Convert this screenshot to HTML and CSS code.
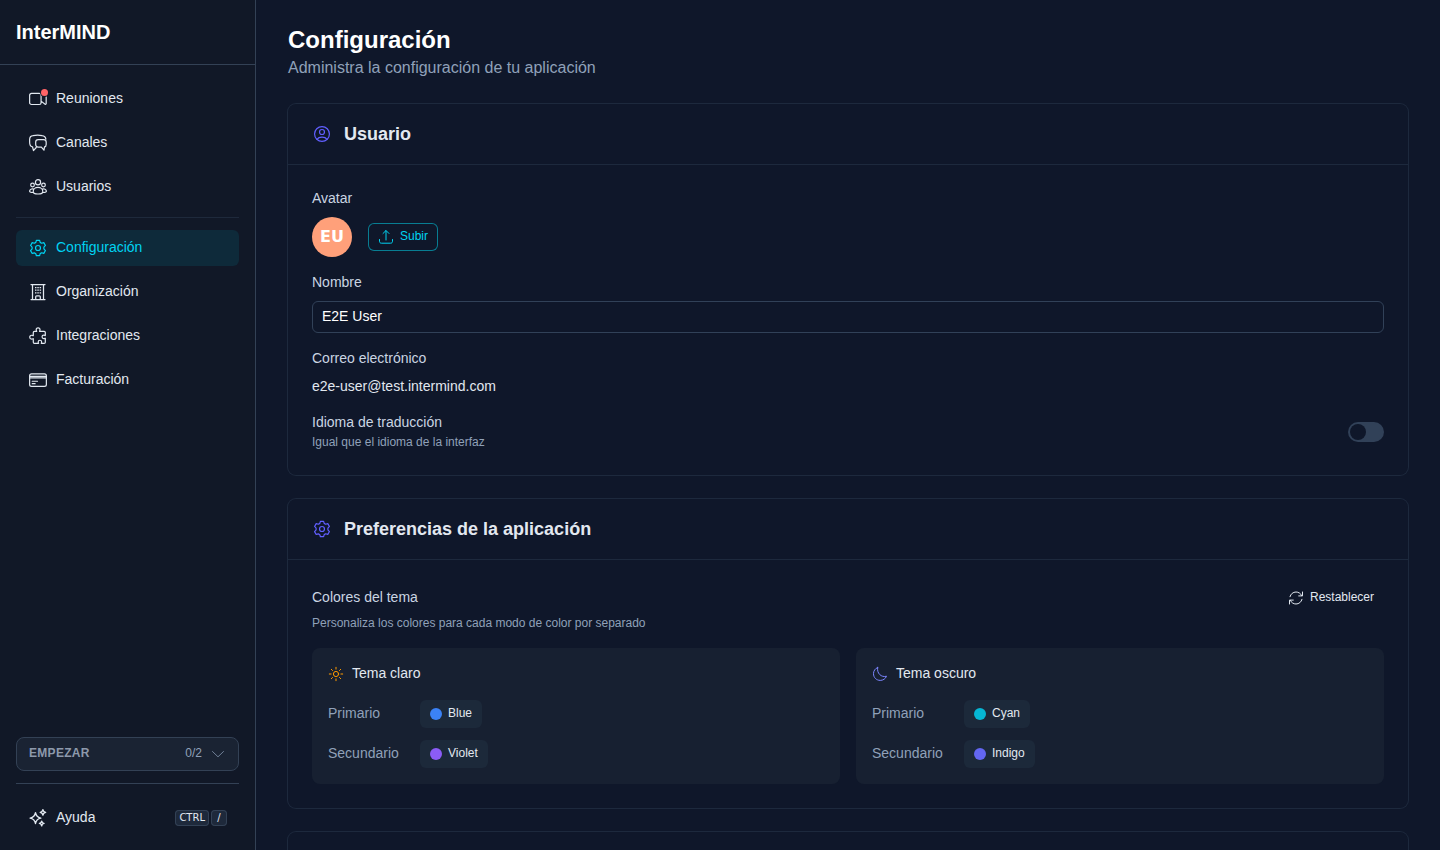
FILE: index.html
```html
<!DOCTYPE html>
<html lang="es">
<head>
    <meta charset="UTF-8">
    <meta name="viewport" content="width=device-width, initial-scale=1.0">
    <title>InterMIND - Configuración</title>
    <link rel="stylesheet" href="styles.css">
</head>
<body>
    <!-- Shared icons -->
    <svg class="sprite" aria-hidden="true">
        <symbol id="icon-gear" viewBox="-0.5 -0.5 21 21">
            <circle cx="10" cy="10" r="2.6"/>
            <path d="M8.3 1.9h3.4l.6 2.2 1.5.9 2.3-.6 1.7 2.9-1.6 1.7v2l1.6 1.7-1.7 2.9-2.3-.6-1.5.9-.6 2.2H8.3L7.7 16l-1.5-.9-2.3.6-1.7-2.9L3.8 11V9L2.2 7.3l1.700-2.900 2.300.6 1.500-.9z"/>
        </symbol>
    </svg>

    <div class="layout">
        <aside class="sidebar">
            <div class="brand">InterMIND</div>

            <nav class="nav">
                <a class="nav-item">
                    <span class="icon-wrap">
                        <svg class="icon" viewBox="-0.4 -0.4 20.8 20.8"><path d="M3.200 4.200h8.100a1.900 1.900 0 0 1 1.900 1.900v7.700a1.900 1.900 0 0 1-1.900 1.900H3.200a1.900 1.900 0 0 1-1.900-1.900V6.100a1.900 1.900 0 0 1 1.900-1.900zM13.200 8v4.200l4.200 3.200a.7.7 0 0 0 1.100-.5V6.600"/></svg>
                        <span class="dot"></span>
                    </span>
                    Reuniones
                </a>
                <a class="nav-item">
                    <svg class="icon" viewBox="-0.4 -0.4 20.8 20.8"><path d="M4.300 13.900h-.5C2.100 13.500 1.300 12 1.300 9V6.300c0-2.500 1.100-3.700 3.500-4 3.200-.6 6.600-.6 9.400 0 2.500.3 3.700 1.200 4 3.700M4.300 13.900l1 4 2.900-3.200"/><path d="M10.200 6.400h5.700c1.800 0 2.600.9 2.600 2.600v2.600c0 1.500-.6 2.300-1.700 2.500l-.6 3.400-2.700-3.300h-3.300c-1.800 0-2.600-.9-2.600-2.600V9c0-1.700.8-2.600 2.600-2.600z"/></svg>
                    Canales
                </a>
                <a class="nav-item">
                    <svg class="icon" viewBox="-0.4 -0.4 20.8 20.8"><circle cx="10" cy="5" r="2.700"/><circle cx="4.300" cy="7.900" r="1.900"/><circle cx="15.700" cy="7.900" r="1.900"/><path d="M10 10.400c3 0 5 2.100 5 4.200 0 2-2.400 2.700-5 2.700s-5-.7-5-2.700c0-2.100 2-4.200 5-4.200zM5 11.900c-2.200-.3-3.700 1-3.700 2.600 0 .8 1 1.200 3.200 1.200M15 11.900c2.200-.3 3.700 1 3.700 2.600 0 .8-1 1.200-3.200 1.200"/></svg>
                    Usuarios
                </a>
                <div class="nav-separator"></div>
                <a class="nav-item active">
                    <svg class="icon"><use href="#icon-gear"/></svg>
                    Configuración
                </a>
                <a class="nav-item">
                    <svg class="icon" viewBox="0 0 20 20"><path d="M3 2.500h14M3 17.500h14M4.500 2.500v15M15.500 2.500v15M7.700 17.500v-2.700c0-.6.4-1 1-1h2.600c.6 0 1 .4 1 1v2.700"/><path class="windows" d="M7 5.500h1.500M9.300 5.500h1.500M11.600 5.500h1.500M7 8.200h1.500M9.300 8.200h1.500M11.600 8.200h1.500M7 10.900h1.500M9.300 10.900h1.500M11.600 10.900h1.500"/></svg>
                    Organización
                </a>
                <a class="nav-item">
                    <svg class="icon" viewBox="-0.4 -0.4 20.8 20.8"><path d="M8.600 5.200c-.3-.6-.5-1-.5-1.600 0-1.200.8-2 2-2s2 .8 2 2c0 .6-.2 1-.5 1.600h4.800c.7 0 1.200.5 1.200 1.200v3.200c-.6-.2-1-.5-1.600-.5-1 0-1.800.8-1.800 1.800s.8 1.900 1.800 1.900c.6 0 1-.3 1.600-.5v4.100c0 .7-.5 1.200-1.200 1.200h-3c.2-.6.4-.9.4-1.400 0-1.100-.8-1.800-1.800-1.800s-1.800.7-1.800 1.800c0 .5.200.8.400 1.400H6.300c-.7 0-1.200-.5-1.200-1.200v-3.600c-.5.2-1 .5-1.700.5-1.100 0-2-.8-2-1.900S2.300 9.200 3.400 9.200c.7 0 1.200.3 1.700.5V6.400c0-.7.5-1.200 1.200-1.200z"/></svg>
                    Integraciones
                </a>
                <a class="nav-item">
                    <svg class="icon" viewBox="-0.4 -0.4 20.8 20.8"><rect x="1.300" y="3.600" width="17.400" height="13" rx="2"/><path d="M1.300 6.300h17.400M1.300 7.700h17.400M4 11.300h5.500M4 13.800h3"/></svg>
                    Facturación
                </a>
            </nav>

            <div class="sidebar-bottom">
                <div class="onboarding">
                    <span class="onboarding-title">EMPEZAR</span>
                    <span class="onboarding-count">0/2</span>
                    <svg class="chevron" viewBox="0 0 16 16"><path d="M2.500 5.500l5.500 5.300 5.500-5.300"/></svg>
                </div>
                <div class="bottom-line"></div>
                <a class="nav-item">
                    <svg class="icon sparkles" viewBox="0 0 20 20"><path d="M7.500 4.700c.6 3.500 1.900 4.800 5.300 5.400-3.400.6-4.700 1.900-5.300 5.400-.6-3.500-1.900-4.800-5.400-5.400 3.500-.6 4.800-1.900 5.400-5.400z"/><path d="M14.900 1.700c.3 1.800.9 2.400 2.700 2.700-1.800.3-2.400.9-2.700 2.700-.3-1.800-.9-2.400-2.700-2.700 1.800-.3 2.400-.9 2.700-2.700zM13.700 13.100c.2 1.400.8 2.100 2.300 2.300-1.500.3-2.100.9-2.300 2.400-.3-1.500-.9-2.100-2.300-2.400 1.400-.2 2-.9 2.300-2.300z"/></svg>
                    Ayuda
                    <span class="keys"><kbd>CTRL</kbd><kbd>/</kbd></span>
                </a>
            </div>
        </aside>

        <main class="main">
            <header class="page-header">
                <h1>Configuración</h1>
                <p>Administra la configuración de tu aplicación</p>
            </header>

            <section class="card">
                <div class="card-header">
                    <svg class="icon" viewBox="-0.5 -0.5 21 21"><circle cx="10" cy="10" r="7.800"/><circle cx="10" cy="7.900" r="2.600"/><path d="M4.700 15.600c1.200-1.700 3-2.300 5.300-2.300s4.100.6 5.300 2.300"/></svg>
                    <h2>Usuario</h2>
                </div>
                <div class="card-body user-form">
                    <div class="field">
                        <div class="label">Avatar</div>
                        <div class="avatar-row">
                            <div class="avatar">EU</div>
                            <button class="btn-upload">
                                <svg class="icon-sm" viewBox="0 0 16 16"><path d="M8 11V1.800M5 4.500L8 1.500l3 3M1.500 10.500v1.800c0 1.200.7 1.900 1.900 1.900h9.200c1.200 0 1.900-.7 1.900-1.900v-1.800"/></svg>
                                Subir
                            </button>
                        </div>
                    </div>
                    <div class="field">
                        <label class="label" for="name">Nombre</label>
                        <input class="input" id="name" type="text" value="E2E User">
                    </div>
                    <div class="field">
                        <div class="label">Correo electrónico</div>
                        <div class="value">e2e-user@test.intermind.com</div>
                    </div>
                    <div class="switch-row">
                        <div>
                            <div class="label">Idioma de traducción</div>
                            <p class="hint">Igual que el idioma de la interfaz</p>
                        </div>
                        <button class="switch" role="switch" aria-checked="false"><span></span></button>
                    </div>
                </div>
            </section>

            <section class="card">
                <div class="card-header">
                    <svg class="icon"><use href="#icon-gear"/></svg>
                    <h2>Preferencias de la aplicación</h2>
                </div>
                <div class="card-body">
                    <div class="colors-header">
                        <div class="label">Colores del tema</div>
                        <button class="btn-reset">
                            <svg class="icon-sm" viewBox="0 0 16 16"><path d="M2 6.700C2.700 3.900 5.100 2 8 2c2.400 0 4.600 1.300 5.800 3.700M14.500 2v3.900h-3.800M14 9.300C13.300 12.100 10.900 14 8 14c-2.400 0-4.600-1.300-5.800-3.700M1.500 14v-3.900h3.800"/></svg>
                            Restablecer
                        </button>
                    </div>
                    <p class="hint">Personaliza los colores para cada modo de color por separado</p>

                    <div class="themes">
                        <div class="theme">
                            <div class="theme-title">
                                <svg class="icon-sm sun" viewBox="0 0 16 16"><circle cx="8" cy="8" r="2.600"/><path d="M8 1.300v1.800M8 12.900v1.800M1.300 8h1.800M12.900 8h1.800M3.300 3.300l1.200 1.200M11.500 11.500l1.200 1.200M3.300 12.700l1.200-1.200M11.500 4.500l1.200-1.200"/></svg>
                                Tema claro
                            </div>
                            <div class="theme-row">
                                <span class="theme-label">Primario</span>
                                <button class="chip"><span class="swatch blue"></span>Blue</button>
                            </div>
                            <div class="theme-row">
                                <span class="theme-label">Secundario</span>
                                <button class="chip"><span class="swatch violet"></span>Violet</button>
                            </div>
                        </div>
                        <div class="theme">
                            <div class="theme-title">
                                <svg class="icon-sm moon" viewBox="0 0 16 16"><path d="M5.700 1.500C3.100 2.500 1.500 4.900 1.500 7.700c0 3.800 2.900 6.700 6.700 6.700 2.900 0 5.300-1.600 6.300-4.200-5.100 1.600-10.100-3-8.800-8.700z"/></svg>
                                Tema oscuro
                            </div>
                            <div class="theme-row">
                                <span class="theme-label">Primario</span>
                                <button class="chip"><span class="swatch cyan"></span>Cyan</button>
                            </div>
                            <div class="theme-row">
                                <span class="theme-label">Secundario</span>
                                <button class="chip"><span class="swatch indigo"></span>Indigo</button>
                            </div>
                        </div>
                    </div>
                </div>
            </section>

            <section class="card">
                <div class="card-header"></div>
            </section>
        </main>
    </div>
</body>
</html>
```

FILE: styles.css
```css
* {
    margin: 0;
    padding: 0;
    box-sizing: border-box;
}

body {
    font-family: "Liberation Sans", Arial, sans-serif;
    font-size: 14px;
    line-height: 1.42857;
    color: #e2e8f0;
    background: #0f172a;
    overflow: hidden;
}

button {
    font: inherit;
    color: inherit;
    background: none;
    border: none;
}

svg {
    display: block;
    fill: none;
    stroke: currentColor;
    stroke-width: 1.25;
    stroke-linecap: round;
    stroke-linejoin: round;
    flex-shrink: 0;
}

.sprite {
    display: none;
}

.icon {
    width: 20px;
    height: 20px;
}

.icon-sm {
    width: 16px;
    height: 16px;
    stroke-width: 1;
}

.layout {
    display: flex;
    height: 100vh;
}

/* Sidebar */
.sidebar {
    width: 256px;
    flex-shrink: 0;
    display: flex;
    flex-direction: column;
    background: #111827;
    border-right: 1px solid #334155;
}

.brand {
    height: 65px;
    padding: 0 16px;
    border-bottom: 1px solid #334155;
    font-size: 20px;
    font-weight: bold;
    line-height: 64px;
    color: #fff;
}

.nav {
    flex: 1;
    display: flex;
    flex-direction: column;
    gap: 8px;
    padding: 16px;
}

.nav-item {
    height: 36px;
    display: flex;
    align-items: center;
    gap: 8px;
    padding: 0 12px;
    border-radius: 6px;
}

.nav-item.active {
    color: #00d3f2;
    background: #0e2a3a;
}

.nav-separator {
    height: 1px;
    margin: 4px 0;
    background: #1e293b;
}

.windows {
    stroke-linecap: butt;
}

.sparkles {
    stroke-width: 1.4;
}

.icon-wrap {
    position: relative;
}

.dot {
    position: absolute;
    top: 0;
    right: 0;
    width: 7px;
    height: 7px;
    border-radius: 50%;
    background: #ff6467;
    box-shadow: 0 0 0 1px #111827;
}

.sidebar-bottom {
    padding: 0 16px 14px;
}

.onboarding {
    height: 34px;
    display: flex;
    align-items: center;
    padding: 0 12px;
    background: #1a2333;
    border: 1px solid #334155;
    border-radius: 8px;
    font-size: 12px;
    line-height: 1.3333;
    color: #90a1b9;
}

.onboarding-title {
    font-weight: bold;
    letter-spacing: 0.3px;
    color: #8d99ab;
}

.onboarding-count {
    margin-left: auto;
}

.chevron {
    width: 16px;
    height: 16px;
    margin-left: 8px;
    stroke-width: 1;
    color: #6f7f96;
}

.bottom-line {
    height: 1px;
    margin: 12px 0 16px;
    background: #334155;
}

.keys {
    display: flex;
    gap: 2px;
    margin-left: auto;
}

kbd {
    min-width: 16px;
    height: 16px;
    padding: 0 4px;
    border-radius: 4px;
    background: #1e293b;
    box-shadow: inset 0 0 0 1px #334155;
    font-family: "DejaVu Sans", sans-serif;
    font-size: 10px;
    line-height: 16px;
    text-align: center;
}

/* Page */
.main {
    flex: 1;
    padding: 24px 32px;
    overflow: hidden;
}

.page-header {
    margin-bottom: 24px;
}

.page-header h1 {
    font-size: 24px;
    line-height: 32px;
    color: #fff;
}

.page-header p {
    font-size: 16px;
    line-height: 24px;
    color: #90a1b9;
}

.card {
    margin-bottom: 24px;
    border-radius: 8px;
    box-shadow: 0 0 0 1px #1d293d;
}

.card-header {
    height: 61px;
    display: flex;
    align-items: center;
    gap: 12px;
    padding: 0 24px;
    border-bottom: 1px solid #1d293d;
}

.card-header .icon {
    color: #615fff;
}

.card-header h2 {
    font-size: 18px;
    line-height: 28px;
}

.card-body {
    padding: 24px;
}

.label {
    display: block;
    color: #cad5e2;
}

.hint {
    font-size: 12px;
    line-height: 1.3333;
    color: #90a1b9;
}

/* User form */
.user-form {
    display: flex;
    flex-direction: column;
    gap: 16px;
}

.field {
    display: flex;
    flex-direction: column;
    gap: 8px;
}

.avatar-row {
    display: flex;
    align-items: center;
    gap: 16px;
}

.avatar {
    width: 40px;
    height: 40px;
    border-radius: 50%;
    background: #ffa07a;
    color: #fff;
    font-family: "DejaVu Sans", sans-serif;
    font-size: 16px;
    font-weight: bold;
    line-height: 40px;
    text-align: center;
}

.btn-upload {
    height: 28px;
    display: flex;
    align-items: center;
    gap: 6px;
    padding: 0 10px;
    border-radius: 6px;
    box-shadow: inset 0 0 0 1px #087d92;
    font-size: 12px;
    line-height: 1.3333;
    color: #00d3f2;
}

.input {
    width: 100%;
    height: 32px;
    padding: 0 9px 2px;
    border: 1px solid #314158;
    border-radius: 6px;
    background: transparent;
    font: inherit;
    color: #fff;
    outline: none;
}

.switch-row {
    display: flex;
    align-items: center;
    justify-content: space-between;
}

.switch-row .hint {
    margin-top: 2px;
}

.switch {
    width: 36px;
    height: 20px;
    padding: 2px;
    border-radius: 10px;
    background: #314158;
}

.switch span {
    display: block;
    width: 16px;
    height: 16px;
    border-radius: 50%;
    background: #0f172a;
}

/* Theme colors */
.colors-header {
    display: flex;
    align-items: center;
    justify-content: space-between;
    margin-bottom: 4px;
}

.btn-reset {
    height: 28px;
    display: flex;
    align-items: center;
    gap: 6px;
    padding: 0 10px;
    font-size: 12px;
    line-height: 1.3333;
}

.themes {
    display: grid;
    grid-template-columns: 1fr 1fr;
    gap: 16px;
    margin-top: 16px;
}

.theme {
    display: flex;
    flex-direction: column;
    gap: 12px;
    padding: 16px;
    border-radius: 8px;
    background: #172031;
}

.theme-title {
    display: flex;
    align-items: center;
    gap: 8px;
    margin-bottom: 4px;
}

.sun {
    color: #fe9a00;
}

.moon {
    color: #7c86ff;
}

.theme-row {
    display: flex;
    align-items: center;
    gap: 12px;
}

.theme-label {
    width: 80px;
    color: #90a1b9;
}

.chip {
    height: 28px;
    display: flex;
    align-items: center;
    gap: 6px;
    padding: 0 10px;
    border-radius: 6px;
    background: #1c293a;
    font-size: 12px;
    line-height: 1.3333;
}

.swatch {
    width: 12px;
    height: 12px;
    border-radius: 50%;
}

.swatch.blue {
    background: #3b82f6;
}

.swatch.violet {
    background: #8b5cf6;
}

.swatch.cyan {
    background: #06b6d4;
}

.swatch.indigo {
    background: #6366f1;
}
```
